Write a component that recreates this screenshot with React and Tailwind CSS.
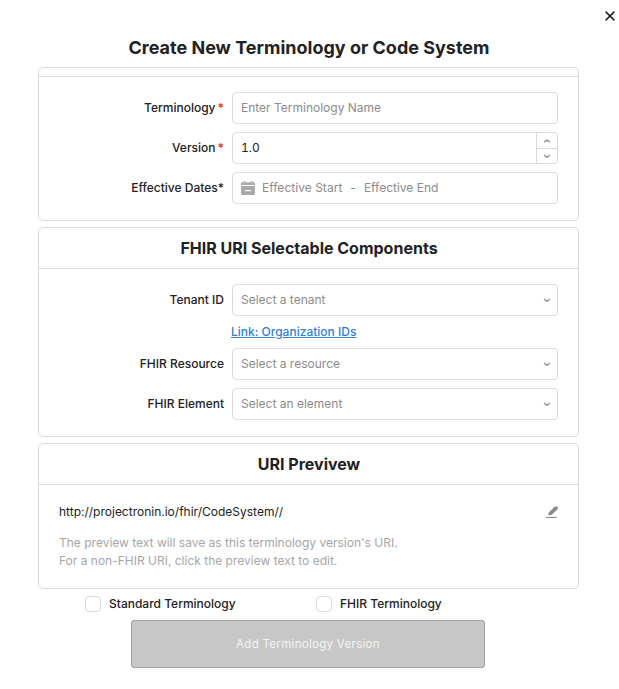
import React from "react";

const Chevron = ({ up = false }) => (
  <svg width="8" height="8" viewBox="0 0 8 8" fill="none" stroke="#a0a0a0" strokeWidth="1.6" className="shrink-0">
    <path d={up ? "M1 5.2 L4 3.1 L7 5.2" : "M1 3.1 L4 5.2 L7 3.1"} />
  </svg>
);

const CalendarIcon = () => (
  <svg width="14" height="14" viewBox="0 0 14 14" className="shrink-0">
    <path fill="#a8a8a8" d="M1.2 1.3H2.7V0H4.1V1.3H9.9V0H11.3V1.3H12.8Q14 1.3 14 2.5V4.1H0V2.5Q0 1.3 1.2 1.3ZM0 4.9H14V12.6Q14 14 12.6 14H1.4Q0 14 0 12.6ZM4 9V10.3H10V9Z" fillRule="evenodd" />
    <path d="M2.7 2.7H4.1M9.9 2.7H11.3" stroke="#e5e5e5" strokeWidth=".7" />
  </svg>
);

const EditIcon = () => (
  <svg width="12" height="12" viewBox="0 0 12 12" className="shrink-0">
    <path fill="#8a8a8a" d="M2.2 9.2L2.7 6.5L8.7 .7Q9.7 -.3 10.8 .6L11.5 1.3Q12.5 2.3 11.6 3.3L5.4 8.9Z" />
    <path d="M0 11.4H10.6" stroke="#8a8a8a" strokeWidth="1.1" />
  </svg>
);

const Card = ({ title, children }) => (
  <section className="rounded-[5px] border border-[#d9d9d9]">
    {title ? (
      <h2 className="h-[41px] border-b border-[#d9d9d9] pl-[1px] text-center text-[16px] leading-[40px] font-bold text-[#222]">{title}</h2>
    ) : (
      <div className="h-[9px] border-b border-[#d9d9d9]" />
    )}
    {children}
  </section>
);

const Row = ({ label, required, children }) => (
  <div className="flex h-8 items-center">
    <label className="flex w-[185px] justify-end text-[12px] font-medium whitespace-nowrap text-[#222]">
      {label}
      {required && <span className="ml-[2px] text-[12px] leading-[18px] font-semibold text-[#d83b35]">*</span>}
    </label>
    <div className="ml-2 flex h-8 w-[326px] items-center overflow-hidden rounded-[4px] border border-[#d9d9d9] pl-2 text-[12px] text-[#8c8c8c]">
      {children}
    </div>
  </div>
);

const SelectRow = ({ label, text }) => (
  <Row label={label}>
    <span className="flex-1">{text}</span>
    <span className="mr-[6px]"><Chevron /></span>
  </Row>
);

const Check = ({ label }) => (
  <label className="flex items-center gap-2 text-[12px] font-medium whitespace-nowrap text-[#222]">
    <span className="h-4 w-4 rounded-[4px] border border-[#d9d9d9]" />
    {label}
  </label>
);

export default function App() {
  return (
    <div className="h-[689px] w-[619px] overflow-hidden bg-white font-['Inter',sans-serif]">
      <header className="flex h-[31px] items-center justify-end pr-1">
        <svg width="10" height="10" viewBox="0 0 10 10" stroke="#222" strokeWidth="1.5"><path d="M.6 .6L9.4 9.4M9.4 .6L.6 9.4" /></svg>
      </header>
      <h1 className="h-9 pr-[1px] text-center text-[18px] leading-[33px] font-bold text-[#222]">Create New Terminology or Code System</h1>
      <main className="ml-[38px] flex w-[541px] flex-col gap-[6px]">
        <Card>
          <div className="flex flex-col gap-2 pt-[15px] pb-4">
            <Row label="Terminology" required>Enter Terminology Name</Row>
            <Row label="Version" required>
              <span className="flex-1 text-[#222] tabular-nums">1.0</span>
              <div className="flex h-[30px] w-[21px] flex-col border-l border-[#d9d9d9]">
                <div className="flex h-4 items-center justify-center border-b border-[#d9d9d9]"><Chevron up /></div>
                <div className="flex flex-1 items-center justify-center"><Chevron /></div>
              </div>
            </Row>
            <Row label="Effective Dates*">
              <CalendarIcon />
              <span className="ml-[7px] tracking-[0.03px]">Effective Start</span>
              <span className="mx-2">-</span>
              <span>Effective End</span>
            </Row>
          </div>
        </Card>
        <Card title="FHIR URI Selectable Components">
          <div className="flex flex-col pt-[15px] pb-4">
            <SelectRow label="Tenant ID" text="Select a tenant" />
            <div className="flex h-8 items-center pl-[192px]">
              <a className="text-[12px] font-medium text-[#2f80d0] underline">Link: Organization IDs</a>
            </div>
            <div className="flex flex-col gap-2">
              <SelectRow label="FHIR Resource" text="Select a resource" />
              <SelectRow label="FHIR Element" text="Select an element" />
            </div>
          </div>
        </Card>
        <Card title="URI Previvew">
          <div className="h-[103px] px-5 pt-[17px] text-[12px]">
            <div className="flex h-5 items-center justify-between text-[#222]">
              <span>http://projectronin.io/fhir/CodeSystem//</span>
              <EditIcon />
            </div>
            <p className="mt-3 leading-[18px] text-[#a6a6a6]">
              The preview text will save as this terminology version's URI.
              <br />
              For a non-FHIR URI, click the preview text to edit.
            </p>
          </div>
        </Card>
      </main>
      <div className="mt-[6px] flex h-[18px] items-center pl-[85px]">
        <div className="w-[231px]"><Check label="Standard Terminology" /></div>
        <Check label="FHIR Terminology" />
      </div>
      <button className="mt-[7px] ml-[131px] block h-12 w-[354px] rounded-[3px] border border-[#a0a0a0] bg-[#c7c7c7] pt-[1px] text-[11.5px] tracking-[0.3px] text-[#f4f4f4]">
        Add Terminology Version
      </button>
    </div>
  );
}
